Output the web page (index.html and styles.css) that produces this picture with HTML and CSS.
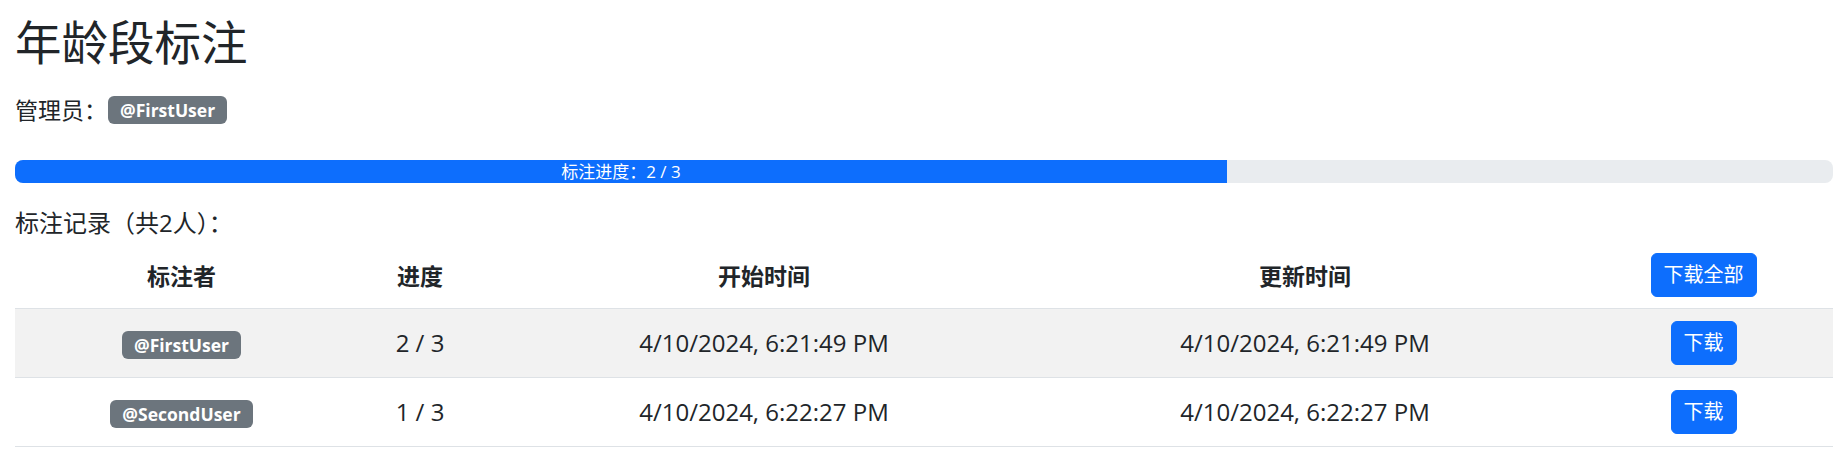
FILE: index.html
```html
<!DOCTYPE html>
<html lang="zh-CN">
<head>
<meta charset="utf-8">
<title>年龄段标注</title>
<link rel="stylesheet" href="styles.css">
</head>
<body>
<div class="page">
  <h1 class="title">年龄段标注</h1>
  <div class="admin">管理员：<span class="badge">@FirstUser</span></div>
  <div class="progress">
    <div class="progress-bar" style="width: 66.6667%">标注进度：2 / 3</div>
  </div>
  <p class="records">标注记录（共2人）：</p>
  <table class="table">
    <colgroup>
      <col class="c-user"><col class="c-prog"><col class="c-start"><col class="c-update"><col class="c-act">
    </colgroup>
    <thead>
      <tr>
        <th>标注者</th>
        <th>进度</th>
        <th>开始时间</th>
        <th>更新时间</th>
        <th><button class="btn">下载全部</button></th>
      </tr>
    </thead>
    <tbody>
      <tr class="striped">
        <td><span class="badge">@FirstUser</span></td>
        <td>2 / 3</td>
        <td>4/10/2024, 6:21:49 PM</td>
        <td>4/10/2024, 6:21:49 PM</td>
        <td><button class="btn">下载</button></td>
      </tr>
      <tr>
        <td><span class="badge">@SecondUser</span></td>
        <td>1 / 3</td>
        <td>4/10/2024, 6:22:27 PM</td>
        <td>4/10/2024, 6:22:27 PM</td>
        <td><button class="btn">下载</button></td>
      </tr>
    </tbody>
  </table>
</div>
</body>
</html>
```

FILE: styles.css
```css
* { box-sizing: border-box; }

html, body {
  margin: 0;
  padding: 0;
  background: #fff;
}

body {
  font-family: "Open Sans", "Noto Sans CJK SC", sans-serif;
  color: #212529;
  font-size: 24px;
}

.page {
  padding: 14px 13px 0 15px;
}

.title {
  margin: 0;
  font-size: 46.5px;
  line-height: 56px;
  font-weight: 400;
}

.admin {
  margin-top: 23px;
  height: 34px;
  line-height: 34px;
  font-size: 23px;
  display: flex;
  align-items: center;
}

.badge {
  display: inline-block;
  height: 28px;
  line-height: 28px;
  padding: 0 12px;
  border-radius: 6px;
  background: #6c757d;
  color: #fff;
  font-weight: 700;
  font-size: 17.5px;
  white-space: nowrap;
}

.admin .badge { margin-left: 1px; }

.progress {
  margin-top: 33px;
  height: 23px;
  background: #e9ecef;
  border-radius: 8px;
  overflow: hidden;
  display: flex;
}

.progress-bar {
  background: #0d6efd;
  color: #fff;
  font-size: 17px;
  line-height: 23px;
  text-align: center;
  white-space: nowrap;
}

.records {
  margin: 25px 0 0;
  height: 30px;
  line-height: 30px;
  font-size: 24px;
}

.table {
  margin-top: 5px;
  width: 100%;
  border-collapse: collapse;
  table-layout: fixed;
}

.c-user { width: 333px; }
.c-prog { width: 144px; }
.c-start { width: 544px; }
.c-update { width: 538px; }
.c-act { width: 259px; }

.table th {
  height: 65px;
  padding: 0;
  text-align: center;
  vertical-align: middle;
  font-weight: 700;
  font-size: 23px;
  border-bottom: 1px solid #dee2e6;
}

.table td {
  height: 69px;
  padding: 0;
  text-align: center;
  vertical-align: middle;
  border-bottom: 1px solid #dee2e6;
  font-size: 24px;
}

.table tr.striped td { background: #f2f2f2; }

.btn {
  font-family: "Open Sans", "Noto Sans CJK SC", sans-serif;
  font-size: 20px;
  line-height: 30px;
  padding: 6px 12px;
  border: 1px solid #0d6efd;
  border-radius: 6px;
  background: #0d6efd;
  color: #fff;
  cursor: pointer;
}
```
